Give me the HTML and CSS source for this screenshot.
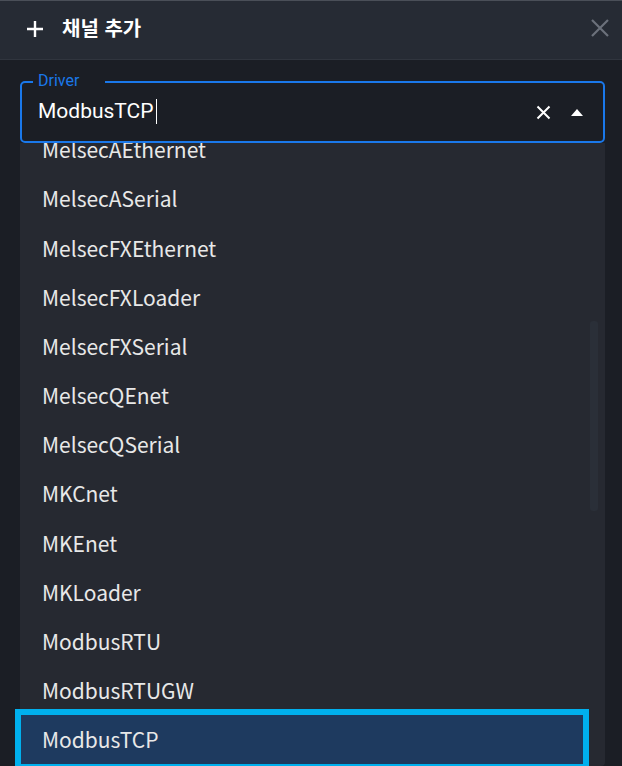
FILE: index.html
```html
<!DOCTYPE html>
<html lang="ko">
<head>
<meta charset="utf-8">
<title>채널 추가</title>
<link rel="stylesheet" href="styles.css">
</head>
<body>
<div class="dialog">
  <header class="head">
    <svg class="plus" width="18" height="18" viewBox="0 0 18 18"><path d="M9 1v16M1 9h16" stroke="#fff" stroke-width="2.4" fill="none"/></svg>
    <h1 class="title">채널 추가</h1>
    <svg class="close" width="20" height="20" viewBox="0 0 20 20"><path d="M2 2l16 16M18 2L2 18" stroke="#6b717b" stroke-width="2.2" fill="none"/></svg>
  </header>
  <main class="body">
    <div class="field">
      <span class="label">Driver</span>
      <div class="value">ModbusTCP<span class="cursor"></span></div>
      <svg class="clear" width="15" height="15" viewBox="0 0 15 15"><path d="M1.5 1.5l12 12M13.5 1.5l-12 12" stroke="#fff" stroke-width="2" fill="none"/></svg>
      <svg class="caret" width="12" height="7" viewBox="0 0 12 7"><path d="M0 7L6 0l6 7z" fill="#fff"/></svg>
    </div>
    <div class="panel">
      <ul class="list">
        <li class="item">MelsecAEthernet</li>
        <li class="item">MelsecASerial</li>
        <li class="item">MelsecFXEthernet</li>
        <li class="item">MelsecFXLoader</li>
        <li class="item">MelsecFXSerial</li>
        <li class="item">MelsecQEnet</li>
        <li class="item">MelsecQSerial</li>
        <li class="item">MKCnet</li>
        <li class="item">MKEnet</li>
        <li class="item">MKLoader</li>
        <li class="item">ModbusRTU</li>
        <li class="item">ModbusRTUGW</li>
        <li class="item selected">ModbusTCP</li>
      </ul>
      <div class="track"><div class="thumb"></div></div>
    </div>
  </main>
</div>
</body>
</html>
```

FILE: styles.css
```css
* { box-sizing: border-box; }
html, body { margin: 0; padding: 0; }
body {
  background: #1b1e25;
  width: 622px;
  height: 766px;
  overflow: hidden;
  font-family: Roboto, "Noto Sans CJK KR", sans-serif;
}
.dialog { display: flex; flex-direction: column; height: 766px; }
.head {
  height: 60px;
  flex: none;
  background: #262b34;
  border-top: 1px solid #4a4f58;
  border-bottom: 1px solid #30353e;
  display: flex;
  align-items: center;
  padding: 0 12px 0 26px;
}
.plus { flex: none; margin-top: -2px; }
.title {
  margin: 0 0 0 18px;
  font-family: "Noto Sans CJK KR", sans-serif;
  font-weight: 700;
  font-size: 20px;
  color: #fff;
  flex: 1;
  line-height: 1;
  margin-top: -4px;
}
.close { flex: none; margin-top: -4px; }
.body {
  flex: 1;
  display: flex;
  flex-direction: column;
  padding: 21px 17px 0 20px;
  min-height: 0;
}
.field {
  position: relative;
  height: 62px;
  flex: none;
  border: 2px solid #1a78ea;
  border-radius: 5px;
  display: flex;
  align-items: center;
  padding: 0 20px 0 16px;
}
.label {
  position: absolute;
  left: 11px;
  top: -11px;
  padding: 0 26px 0 5px;
  background: #1b1e25;
  color: #1a78ea;
  font-size: 16px;
  line-height: 18px;
}
.value {
  flex: 1;
  color: #fff;
  font-size: 21px;
  display: flex;
  align-items: center;
  margin-top: -2px;
}
.cursor {
  display: inline-block;
  width: 1px;
  height: 25px;
  background: #fff;
  margin-left: 2px;
}
.clear { flex: none; margin-right: 20px; }
.caret { flex: none; }
.panel {
  flex: 1;
  min-height: 0;
  background: #262931;
  display: grid;
  grid-template-columns: 1fr 22px;
  padding-left: 1px;
  border-radius: 0 0 4px 4px;
}
.list {
  list-style: none;
  margin: -18.4px 0 0 0;
  padding: 0;
}
.item {
  height: 49.18px;
  display: flex;
  align-items: center;
  padding-left: 21px;
  color: #e8e8e8;
  font-family: "Noto Sans CJK KR", sans-serif;
  font-size: 21px;
}
.item.selected {
  background: #1e3a5f;
  outline: 6px solid #00b0ee;
}
.track { padding: 178px 7px 0 7px; }
.thumb { height: 190px; background: #2a2f38; border-radius: 3px; }
```
